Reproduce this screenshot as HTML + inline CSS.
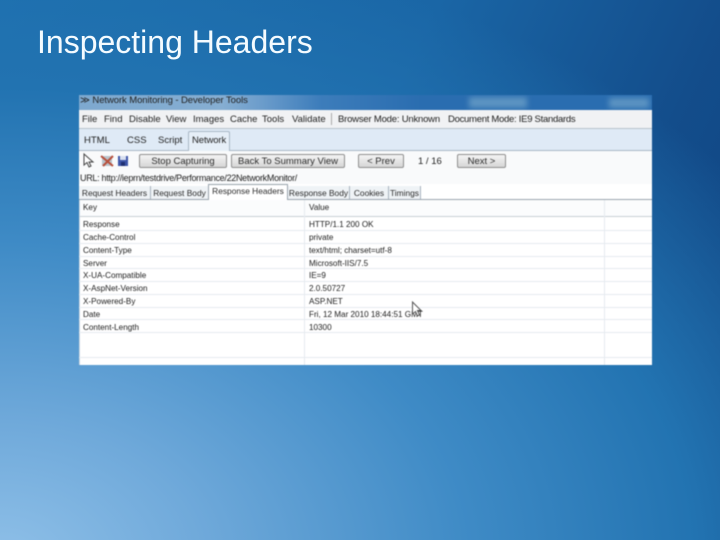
<!DOCTYPE html>
<html><head><meta charset="utf-8"><style>
html,body{margin:0;padding:0}
body{width:720px;height:540px;position:relative;overflow:hidden;font-family:"Liberation Sans",sans-serif;
background:
radial-gradient(ellipse 930px 630px at 0px 560px,#8fc0e8 0%,#6fa9da 22%,#3f8bc6 50%,#2273b1 75%,rgba(27,100,165,0) 100%),
linear-gradient(115deg,#1c6fae 0%,#1a66a6 45%,#134d8b 75%,#0f4280 100%);}
h1{position:absolute;left:37px;top:24px;margin:0;font-weight:400;font-size:32px;line-height:36px;color:#f4fbff;white-space:nowrap}
.w{position:absolute;left:79px;top:95px;width:573px;height:270px;background:#fff;overflow:hidden;filter:blur(.4px)}
.a{position:absolute;white-space:nowrap;font-size:9.5px;line-height:12px;color:#222}
.t{font-size:8.15px}
.r{position:absolute;left:0;width:573px;height:1px;background:#e6ebf0}
.btn{position:absolute;top:59px;height:12px;border:1px solid #8f8f8f;border-radius:2px;background:linear-gradient(#f4f4f4,#d6d6d6);font-size:9.5px;line-height:13px;text-align:center;color:#2c2c2c}
.st{position:absolute;top:91px;height:13px;background:#eff3f6;border-right:1px solid #a9b4bf;font-size:8.4px;line-height:14px;color:#2c2c2c;text-align:center;white-space:nowrap}
</style></head><body>
<h1>Inspecting Headers</h1>
<div class="w">
<div style="position:absolute;left:0;top:0;width:573px;height:15px;background:linear-gradient(90deg,#7ea9cf 0%,#86aed2 25%,#6b9ccb 32%,#3d7dbb 42%,#2a6db0 60%,#2a6db0 100%)"></div>
<div style="position:absolute;left:390px;top:2px;width:58px;height:11px;background:#5d94c2;filter:blur(3px)"></div>
<div style="position:absolute;left:530px;top:3px;width:40px;height:10px;background:#5d94c2;filter:blur(3px)"></div>
<div class="a" style="left:1px;top:0px;letter-spacing:-.08px">&#8811; Network Monitoring - Developer Tools</div>

<div style="position:absolute;left:0;top:15px;width:573px;height:18px;background:#f1f2f4;border-bottom:1px solid #b9c3cc"></div>
<div class="a" style="left:3px;top:19px">File</div>
<div class="a" style="left:25px;top:19px">Find</div>
<div class="a" style="left:50px;top:19px">Disable</div>
<div class="a" style="left:87px;top:19px">View</div>
<div class="a" style="left:114px;top:19px">Images</div>
<div class="a" style="left:151px;top:19px">Cache</div>
<div class="a" style="left:183px;top:19px">Tools</div>
<div class="a" style="left:213px;top:19px">Validate</div>
<div style="position:absolute;left:252px;top:18px;width:1px;height:12px;background:#aaa"></div>
<div class="a" style="left:259px;top:19px;letter-spacing:-.2px">Browser Mode: Unknown</div>
<div class="a" style="left:369px;top:19px;letter-spacing:-.28px">Document Mode: IE9 Standards</div>

<div style="position:absolute;left:0;top:34px;width:573px;height:21px;background:#dfeaf6;border-bottom:1px solid #a9b8c6"></div>
<div class="a" style="left:5px;top:40px">HTML</div>
<div class="a" style="left:48px;top:40px">CSS</div>
<div class="a" style="left:79px;top:40px">Script</div>
<div style="position:absolute;left:109px;top:36px;width:42px;height:20px;background:#e6eff8;border:1px solid #a9b8c6;border-bottom:none;border-radius:2px 2px 0 0;box-sizing:border-box"></div>
<div class="a" style="left:113px;top:40px;letter-spacing:-.1px">Network</div>

<div style="position:absolute;left:0;top:56px;width:573px;height:33px;background:#f9fafb"></div>
<svg style="position:absolute;left:3px;top:58px" width="48" height="16" viewBox="0 0 48 16">
<path d="M2 1 L2 12 L5 9.5 L7 14 L9 13 L7 9 L11 9 Z" fill="#fff" stroke="#444" stroke-width="1"/>
<rect x="20" y="3" width="10" height="10" fill="#b9c4cc"/>
<path d="M19 3 L31 13 M31 3 L21 13" stroke="#b8503c" stroke-width="2"/>
<rect x="36" y="3" width="10" height="10" fill="#3d55a8"/>
<rect x="38" y="3" width="6" height="4" fill="#d8e0f0"/>
<rect x="39" y="9" width="4" height="4" fill="#1e2f72"/>
</svg>
<div class="btn" style="left:60px;width:86px">Stop Capturing</div>
<div class="btn" style="left:152px;width:112px">Back To Summary View</div>
<div class="btn" style="left:279px;width:44px">&lt; Prev</div>
<div class="a" style="left:339px;top:61px">1 / 16</div>
<div class="btn" style="left:378px;width:47px">Next &gt;</div>
<div class="a" style="left:1px;top:77px;font-size:9px;letter-spacing:-.3px">URL: http://ieprn/testdrive/Performance/22NetworkMonitor/</div>

<div class="st" style="left:0;width:71px">Request Headers</div>
<div class="st" style="left:72px;width:57px">Request Body</div>
<div class="st" style="left:209px;width:61px">Response Body</div>
<div class="st" style="left:271px;width:38px">Cookies</div>
<div class="st" style="left:310px;width:31px">Timings</div>
<div style="position:absolute;left:0;top:104px;width:573px;height:1px;background:#9aa5ae"></div>
<div style="position:absolute;left:129px;top:89px;width:80px;height:16px;box-sizing:border-box;background:#fff;border:1px solid #9aa5ae;border-bottom:none;font-size:8.4px;line-height:13px;text-align:center;color:#2c2c2c;white-space:nowrap">Response Headers</div>

<div style="position:absolute;left:0;top:105px;width:573px;height:17px;background:#fbfcfd;border-bottom:1px solid #c9d0d6;box-sizing:border-box"></div>
<div style="position:absolute;left:0;top:105px;width:1px;height:165px;background:#c8d6e2"></div>
<div style="position:absolute;left:225px;top:105px;width:1px;height:165px;background:#e6ebf0"></div>
<div style="position:absolute;left:525px;top:105px;width:1px;height:165px;background:#e6ebf0"></div>
<div class="a t" style="left:4px;top:107px">Key</div>
<div class="a t" style="left:230px;top:107px">Value</div>

<div class="r" style="top:135px"></div><div class="r" style="top:148px"></div><div class="r" style="top:161px"></div><div class="r" style="top:173px"></div><div class="r" style="top:186px"></div><div class="r" style="top:199px"></div><div class="r" style="top:212px"></div><div class="r" style="top:224px"></div><div class="r" style="top:237px"></div><div class="r" style="top:262px"></div>

<div class="a t" style="left:4px;top:124px">Response</div><div class="a t" style="left:230px;top:124px">HTTP/1.1 200 OK</div>
<div class="a t" style="left:4px;top:137px">Cache-Control</div><div class="a t" style="left:230px;top:137px">private</div>
<div class="a t" style="left:4px;top:150px">Content-Type</div><div class="a t" style="left:230px;top:150px">text/html; charset=utf-8</div>
<div class="a t" style="left:4px;top:163px">Server</div><div class="a t" style="left:230px;top:163px">Microsoft-IIS/7.5</div>
<div class="a t" style="left:4px;top:175px">X-UA-Compatible</div><div class="a t" style="left:230px;top:175px">IE=9</div>
<div class="a t" style="left:4px;top:188px">X-AspNet-Version</div><div class="a t" style="left:230px;top:188px">2.0.50727</div>
<div class="a t" style="left:4px;top:201px">X-Powered-By</div><div class="a t" style="left:230px;top:201px">ASP.NET</div>
<div class="a t" style="left:4px;top:214px">Date</div><div class="a t" style="left:230px;top:214px">Fri, 12 Mar 2010 18:44:51 GMT</div>
<div class="a t" style="left:4px;top:227px">Content-Length</div><div class="a t" style="left:230px;top:227px">10300</div>
<svg style="position:absolute;left:332px;top:206px" width="12" height="17" viewBox="0 0 12 17"><path d="M1.5 1 L1.5 13 L4.5 10.5 L6.5 15 L8.5 14 L6.5 9.5 L10 9.5 Z" fill="#fff" stroke="#555" stroke-width="1"/></svg>
</div>
</body></html>
